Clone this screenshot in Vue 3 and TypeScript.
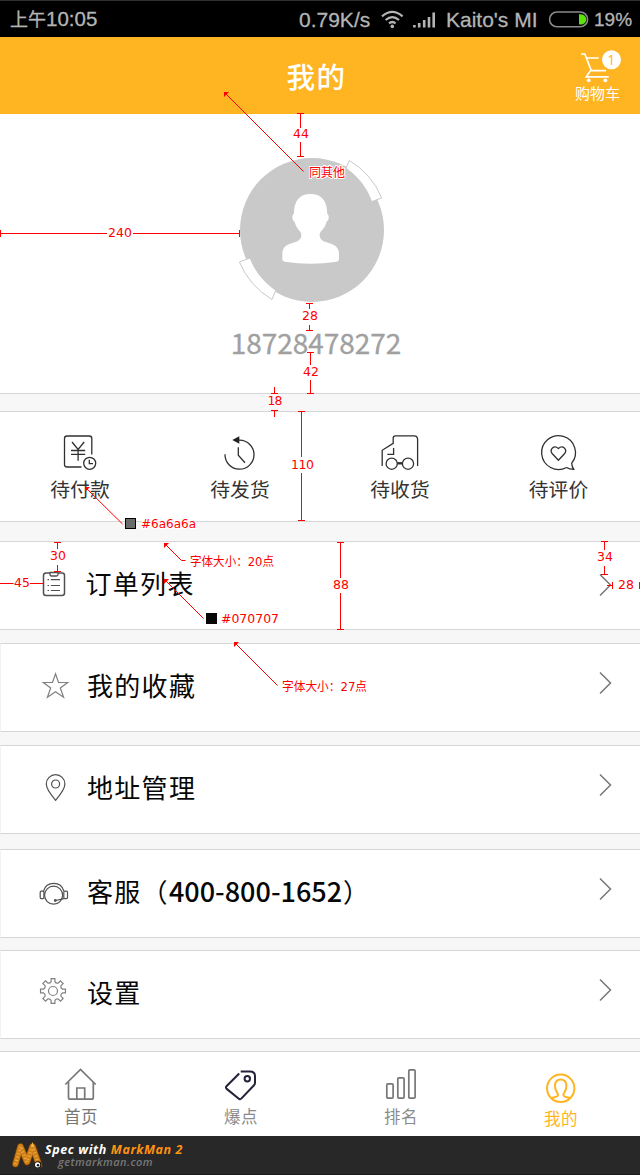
<script setup lang="ts">
interface Order { id: string; label: string }
interface Row { id: string; label: string; phone?: string }
interface Tab { id: string; label: string; active?: boolean }
interface Measure { x: number; y: number; text: string; path: string; width: number }
interface Pointer { tip: [number, number]; path: string }

const orders: Order[] = [
  { id: 'pay', label: '待付款' },
  { id: 'ship', label: '待发货' },
  { id: 'receive', label: '待收货' },
  { id: 'review', label: '待评价' },
]

const rows: Row[] = [
  { id: 'list', label: '订单列表' },
  { id: 'star', label: '我的收藏' },
  { id: 'pin', label: '地址管理' },
  { id: 'service', label: '客服', phone: '400-800-1652' },
  { id: 'gear', label: '设置' },
]

const tabs: Tab[] = [
  { id: 'home', label: '首页' },
  { id: 'tag', label: '爆点' },
  { id: 'rank', label: '排名' },
  { id: 'me', label: '我的', active: true },
]

// Eight-tooth cog outline with rounded valleys
function cog(cx: number, cy: number): string {
  const pt = (r: number, a: number) =>
    `${(cx + r * Math.cos(a)).toFixed(2)} ${(cy + r * Math.sin(a)).toFixed(2)}`
  let d = ''
  for (let i = 0; i < 8; i++) {
    const a = (i * Math.PI) / 4
    d += `${i ? 'L' : 'M'}${pt(9.6, a - 0.2)}L${pt(12.6, a - 0.15)}L${pt(12.6, a + 0.15)}L${pt(9.6, a + 0.2)}`
    d += `Q${pt(8, a + Math.PI / 8)} ${pt(9.6, a + Math.PI / 4 - 0.2)}`
  }
  return d + 'Z'
}
const cogPath = cog(15, 13)

const vertical = (x: number, a: number, b: number, c: number, d: number) =>
  `M${x - 3.5} ${a}h7M${x} ${a}V${b}M${x} ${c}V${d}M${x - 3.5} ${d}h7`

const measures: Measure[] = [
  { x: 301, y: 133.5, text: '44', width: 16, path: vertical(300.5, 113.5, 128, 142, 156.5) },
  { x: 120, y: 233, text: '240', width: 24, path: 'M0.5 230v7M0 233.5H107M133 233.5H239.5M239.5 230v7' },
  { x: 310, y: 315.5, text: '28', width: 16, path: vertical(309.5, 303.5, 309, 325, 330.5) },
  { x: 311, y: 371.5, text: '42', width: 16, path: vertical(310.5, 352.5, 365, 380, 393.5) },
  { x: 275, y: 401, text: '18', width: 15, path: 'M271 393.5h7M274.5 387v6M271 410.5h7M274.5 411v6' },
  { x: 302.5, y: 464.5, text: '110', width: 23, path: vertical(301.5, 411.5, 457, 473, 520.5) },
  { x: 58, y: 555.5, text: '30', width: 16, path: vertical(57.5, 542.5, 549, 565, 571.5) },
  { x: 22, y: 583, text: '45', width: 16, path: 'M0 583.5H14M30 583.5H43M43.5 580v7' },
  { x: 341, y: 585, text: '88', width: 16, path: vertical(340.5, 542.5, 578, 593, 629.5) },
  { x: 605, y: 557, text: '34', width: 16, path: vertical(604.5, 541.5, 550, 566, 574.5) },
  { x: 626, y: 585, text: '28', width: 16, path: 'M607 585.5H612M612.5 582v7M639.5 582v7' },
]

const pointers: Pointer[] = [
  { tip: [224, 92], path: 'M225 93L303.5 171.5' },
  { tip: [85, 487], path: 'M86 488L122.5 524' },
  { tip: [164, 543], path: 'M165 544L181.5 560.5H185.5' },
  { tip: [164, 579], path: 'M165 580L203.5 618.5' },
  { tip: [234, 642], path: 'M235 643L277.5 685.5' },
]

const notes = [
  { x: 309, y: 176.5, text: '同其他', width: 36 },
  { x: 190, y: 565.5, text: '字体大小：20点', width: 84 },
  { x: 282, y: 690.5, text: '字体大小：27点', width: 85 },
  { x: 141, y: 528, text: '#6a6a6a', width: 55 },
  { x: 221, y: 623, text: '#070707', width: 58 },
]
</script>

<template>
  <div class="page">
    <div class="status">
      <span class="clock"><span class="cjk">上午</span>10:05</span>
      <span class="speed">0.79K/s</span>
      <svg width="24" height="20" viewBox="0 0 24 20" class="line status-line">
        <path d="M1 6.3Q11.3 -2.6 21.6 6.3M4.6 10Q11.3 4.2 18 10M8 13.4Q11.3 10.6 14.6 13.4" stroke-width="2.2" />
        <circle cx="11.3" cy="16.4" r="1.8" class="dot" />
      </svg>
      <svg width="24" height="20" viewBox="0 0 24 20" class="line status-line">
        <path d="M1.400 17.500v-2.500M6.200 17.500v-4.500M11.200 17.500v-7.500M16 17.500v-10.500M20.700 17.500v-15" stroke-width="2.6" />
      </svg>
      <span class="carrier">Kaito's MI</span>
      <svg width="42" height="20" viewBox="0 0 42 20">
        <rect x="1.6" y="2" width="38" height="14.8" rx="7.4" class="battery" />
        <path d="M31 4.200h2a5.2 5.2 0 0 1 0 10.4h-2z" class="charge" />
      </svg>
      <span class="percent">19%</span>
    </div>

    <header class="header">
      <h1>我的</h1>
      <div class="cart">
        <svg width="44" height="34" viewBox="577 49 44 34">
          <path d="M581 54h3.8L591 70l-4.8 6.8h22.6M586.7 58h12M590.5 70.6h15.5" class="cart-line" />
          <circle cx="588.7" cy="80.3" r="1.9" fill="#fff" />
          <circle cx="605.3" cy="80.3" r="1.9" fill="#fff" />
          <circle cx="611.5" cy="59.7" r="9.5" fill="#fff" />
          <text x="611.3" y="64.8" class="badge">1</text>
        </svg>
        <span>购物车</span>
      </div>
    </header>

    <section class="profile">
      <svg width="156" height="152" viewBox="234 154 156 152">
        <circle cx="312" cy="230" r="72" fill="#c9c9c9" />
        <g fill="#fff" stroke="#c9c9c9">
          <path d="M346 168.2L349.3 160.5A79 79 0 0 1 381.7 197.8L371.7 201.7A70 70 0 0 0 346 168.2Z" />
          <path d="M250 258L239.4 262A79 79 0 0 0 272 299.5L275.7 290.3A70 70 0 0 1 250 258Z" />
        </g>
        <path fill="#fff" d="M310.5 194C299 194 294 201.500 294 213.500C291.500 215.500 291.800 220 294.700 222C296 227 298 229 300.500 232C302.500 235.500 301 239.500 297 241.500C290 244 282.300 244.500 282.300 254V258.500C282.300 260.500 283 261.300 285 261.700Q310.500 266 336.500 261.700C338.300 261.300 339 260.500 339 258.500V254C339 244.500 331 244 324 241.500C320 239.500 318.500 235.500 320.500 232C323 229 325.500 227 326.300 222C329.300 220 329.500 215.500 327.200 213.500C327.200 201.500 322 194 310.500 194Z" />
      </svg>
      <p class="account">18728478272</p>
    </section>

    <section class="orders">
      <div v-for="o in orders" :key="o.id" class="order">
        <svg width="44" height="44" viewBox="0 0 44 44" class="line order-line">
          <template v-if="o.id === 'pay'">
            <path d="M34.300 23.500V7.500Q34.300 5 31.800 5H9.500Q7 5 7 7.500V33.500Q7 36 9.500 36H24" transform="translate(-.5 0)" />
            <path d="M14 11L20.100 18.500L26.200 11M20.100 18.500V29.700M13 19.500H27.200M13 23.300H27.200" />
            <circle cx="31.700" cy="32.300" r="6" />
            <path d="M31.300 28.700V32.700H35" />
          </template>
          <template v-else-if="o.id === 'ship'">
            <path d="M7 23.300A14.500 14.500 0 1 0 21.500 9.200H20" />
            <path d="M20.300 16.300V24.300L27 31.700" />
            <path d="M14.300 9L21.300 5.200V12.700Z" fill="#222" stroke="none" />
          </template>
          <template v-else-if="o.id === 'receive'">
            <path d="M4.200 35V19.300L15.200 12.300V7Q15.200 4.800 17.400 4.800H36Q39.600 4.800 39.600 8.400V35" />
            <path d="M15.600 17V23.400H9.300" />
            <circle cx="13.700" cy="32.700" r="5.600" />
            <circle cx="30" cy="32.700" r="5.600" />
            <path d="M19.300 32.300H24.500" stroke-width="2.400" />
          </template>
          <template v-else>
            <path d="M29.500 36.400A16.900 16.900 0 1 1 34.500 31.800L36.500 38Z" transform="translate(-1 0)" stroke="none" />
            <path d="M28.500 36.500A16.900 16.900 0 1 1 33.700 32.200Q33.800 35.300 35.700 38.400Q31.500 38.300 28.500 36.500" />
            <path d="M20.400 29.200L14.100 22.500C11.200 18.500 15.900 13.500 20.400 17.500C24.900 13.500 29.600 18.500 26.700 22.500Z" />
          </template>
        </svg>
        <span>{{ o.label }}</span>
      </div>
    </section>

    <section v-for="r in rows" :key="r.id" class="row" :class="'row-' + r.id">
      <svg width="32" height="33" viewBox="0 0 32 33" class="line row-line">
        <template v-if="r.id === 'list'">
          <rect x="5.500" y="3.900" width="21" height="22.600" rx="2.500" stroke-width="1.500" />
          <path d="M12 3.500V5.500Q12 7 13.500 7H18.500Q20 7 20 5.500V3.500Z" fill="#fff" stroke-width="1.300" />
          <path d="M9.500 10.700h1.500M12.800 10.700H22M9.500 16.500h1.500M12.800 16.500H22M9.500 21.500h1.500M12.800 21.500H22" />
        </template>
        <path v-else-if="r.id === 'star'" class="light" d="M17.500 2.800L20.500 11.500H29.700L22.300 16.900L25.600 26.300L17.500 20.700L9.400 26.300L12.700 16.900L5.300 11.500H14.500Z" />
        <template v-else-if="r.id === 'pin'">
          <path d="M17.600 27.300C14 23 8.300 16.500 8.300 11A9.300 9.300 0 0 1 26.900 11C26.900 16.500 21.200 23 17.600 27.300Z" />
          <circle cx="17.600" cy="11" r="4" />
        </template>
        <template v-else-if="r.id === 'service'">
          <circle cx="15.600" cy="18.200" r="9" />
          <path d="M5.600 14C7 9 11 6.400 15.700 6.400S24.400 9 25.800 14" />
          <rect x="2.200" y="14.200" width="3.700" height="7.400" rx="1" />
          <rect x="25.800" y="14.200" width="3.700" height="7.400" rx="1" />
          <path d="M26 21.700L17.500 23.500" /><circle cx="17.300" cy="23.500" r="0.800" />
        </template>
        <template v-else>
          <path :d="cogPath" class="light" /><circle cx="15" cy="13" r="4.500" class="light" />
        </template>
      </svg>
      <span class="row-label">{{ r.label }}<template v-if="r.phone">（<b>{{ r.phone }}</b>）</template></span>
      <svg width="14" height="24" viewBox="0 0 14 24" class="line chevron"><path d="M1 1.500L11.500 12L1 22.500" /></svg>
    </section>

    <nav class="tabs">
      <div v-for="t in tabs" :key="t.id" class="tab" :class="[{ active: t.active }, 'tab-' + t.id]">
        <svg width="40" height="40" viewBox="0 0 40 40" class="line tab-line">
          <template v-if="t.id === 'home'">
            <path d="M4.300 20.500L19.500 5.500L34.700 20.500" />
            <path d="M7.500 18V33.500Q7.500 35.200 9.200 35.200H30.600Q32.300 35.200 32.300 33.500V18M15.800 35V24H23.700V35" />
          </template>
          <template v-else-if="t.id === 'tag'">
            <path d="M19.700 7.500H29Q34 7.500 34 12V18.800Q34 20.300 33 21.300L20.500 34.400Q19 36 17.500 34.500L5.700 24.900Q4.200 23.500 5.700 22L18.200 9.500" />
            <circle cx="26.300" cy="14.700" r="2.700" />
          </template>
          <template v-else-if="t.id === 'rank'">
            <rect x="5.800" y="19.900" width="6.300" height="14.200" rx="1" />
            <rect x="16.800" y="13.800" width="6.300" height="20.300" rx="1" />
            <rect x="27.800" y="5.900" width="6.300" height="28.200" rx="1" />
          </template>
          <template v-else>
            <circle cx="19.700" cy="24.300" r="13.700" />
            <path d="M10.500 34.200C13 32.800 17.400 33.500 17 30.500C16.800 29 14 27 14 22C14 17.500 16 15.500 19.700 15.500S25.400 17.500 25.400 22C25.400 27 22.600 29 22.400 30.500C22 33.500 26.400 32.800 28.900 34.200" />
          </template>
        </svg>
        <span>{{ t.label }}</span>
      </div>
    </nav>

    <footer class="credit">
      <svg width="34" height="30" viewBox="0 0 34 30">
        <g fill="none" stroke-linecap="round">
          <path d="M4.500 23L9.500 5.500L16 21L21.500 5.500L28 24" stroke="#6d3b06" stroke-width="7" stroke-linejoin="round" />
          <path d="M4.500 23L9.500 5.500L16 21L21.500 5.500L28 24" stroke="#d08019" stroke-width="5.500" stroke-linejoin="round" />
          <path d="M4.500 23L9.500 5.500L16 21L21.500 5.500L28 24" stroke="#f3b54c" stroke-width="3" stroke-dasharray="0.800 2.600" stroke-linecap="butt" />
        </g>
        <circle cx="27" cy="23.800" r="3.500" fill="#111" />
        <circle cx="26.600" cy="23.800" r="2.600" fill="#fff" />
        <circle cx="27" cy="24.200" r="1.200" fill="#111" />
      </svg>
      <div class="credit-text">
        <p>Spec with <em>MarkMan 2</em></p>
        <small>getmarkman.com</small>
      </div>
    </footer>

    <svg class="spec" width="640" height="1175" viewBox="0 0 640 1175">
      <path v-for="m in measures" :key="m.path" :d="m.path" class="rule" />
      <g v-for="p in pointers" :key="p.path">
        <path :d="p.path" class="leader" />
        <path :d="`M${p.tip[0]} ${p.tip[1]}h5l-5 5z`" fill="#f00" />
      </g>
      <rect x="125.500" y="518.500" width="10" height="10" fill="#6a6a6a" stroke="#000" />
      <rect x="206" y="613" width="11" height="11" fill="#070707" />
      <text v-for="m in measures" :key="'t' + m.path" :x="m.x" :y="m.y + 4.2" :textLength="m.width" text-anchor="middle">{{ m.text }}</text>
      <text v-for="n in notes" :key="n.text" :x="n.x" :y="n.y" :textLength="n.width" lengthAdjust="spacingAndGlyphs">{{ n.text }}</text>
    </svg>
  </div>
</template>

<style>
body { margin: 0; }
</style>

<style scoped>
.page {
  position: relative;
  width: 640px;
  height: 1175px;
  overflow: hidden;
  background: #f7f7f7;
  font-family: "Noto Sans CJK SC", sans-serif;
  box-sizing: border-box;
}
p, h1 { margin: 0; font-weight: 400; }
.line { fill: none; stroke: #333; stroke-width: 1.3; }

.status {
  display: grid;
  grid-template-columns: 289px 82px 32px 33px 102px 46px 46px;
  align-items: center;
  height: 37px;
  padding-left: 10px;
  box-sizing: border-box;
  border-top: 1px solid #303030;
  background: #000;
  color: #b4b4b4;
  font: 21px/36px "Liberation Sans", "Noto Sans CJK SC", sans-serif;
  -webkit-text-stroke: .3px #b4b4b4;
  white-space: nowrap;
}
.clock { font-size: 20.5px; }
.cjk { font-size: 18px; }
.percent { font-size: 19px; }
.status-line { stroke: #b4b4b4; }
.dot { fill: #b4b4b4; stroke: none; }
.battery { fill: none; stroke: #8a8a8a; stroke-width: 1.6; }
.charge { fill: #5be40c; }

.header {
  display: grid;
  grid-template-columns: 100px 1fr 100px;
  height: 77px;
  background: #ffb422;
  color: #fff;
}
.header h1 {
  grid-column: 2;
  padding-right: 7px;
  text-align: center;
  font-size: 28.5px;
  line-height: 78px;
  font-weight: 500;
  letter-spacing: 1.5px;
}
.cart { display: flex; flex-direction: column; align-items: flex-start; padding: 12px 0 0 35px; font-size: 15px; line-height: 19px; }
.cart svg { display: block; margin-left: 2px; }
.cart-line { fill: none; stroke: #fff; stroke-width: 1.7; }
.badge { fill: #ffb422; font: 500 14px "Open Sans", sans-serif; text-anchor: middle; }

.profile {
  display: flex;
  flex-direction: column;
  align-items: center;
  height: 280px;
  padding: 40px 16px 0 0;
  box-sizing: border-box;
  border-bottom: 1px solid #d6d6d6;
  background: #fff;
}
.profile svg { flex: none; }
.account { margin: 16px 0 0 8px; color: #a0a0a0; font-size: 28px; line-height: 40px; letter-spacing: -.05px; -webkit-text-stroke: .3px #a0a0a0; }

.orders, .row, .tabs { border-top: 1px solid #d6d6d6; background: #fff; box-sizing: border-box; }
.orders {
  display: grid;
  grid-template-columns: repeat(4, 160px);
  height: 111px;
  margin-top: 17px;
  border-bottom: 1px solid #d6d6d6;
}
.order { display: flex; flex-direction: column; align-items: center; padding-top: 19px; color: #333; font-size: 19.8px; line-height: 28px; }
.order:last-child span { margin-right: 3px; }
.order-line { stroke: #303030; }

.row {
  display: flex;
  align-items: center;
  height: 89px;
  padding: 0 27px 0 38px;
  border-bottom: 1px solid #d6d6d6;
  color: #070707;
  font-size: 26px;
  line-height: 40px;
  letter-spacing: 1.3px;
  white-space: nowrap;
}
.row-line { stroke: #505050; stroke-width: 1.2; }
.light { stroke: #808080; }
.row-list { margin-top: 19px; }
.row-star, .row-pin { margin-top: 13px; }
.row-service { margin-top: 15px; }
.row-gear { margin-top: 12px; }
.row:not(.row-list) { padding-left: 37px; border-left: 1px solid #f2f2f2; }
.row-label { margin: -5px 0 0 17px; }
.row-list .row-label { margin-left: 15.5px; }
.row-label b { margin-right: 1px; font-size: 27px; font-weight: 500; letter-spacing: 0; }
.chevron { margin: -10px 0 0 auto; stroke: #777; stroke-width: 1.5; }
.row-list .chevron { margin-top: -1px; }

.tabs { display: grid; grid-template-columns: repeat(4, 160px); height: 85px; margin-top: 12px; padding-left: 1px; overflow: hidden; }
.tab { display: flex; flex-direction: column; align-items: center; padding-top: 12px; color: #777; font-size: 16.5px; line-height: 24px; letter-spacing: .6px; }
.tab-line { stroke: #777; stroke-width: 1.7; }
.tab-tag .tab-line { stroke: #22223a; stroke-width: 2; }
.active { color: #ffb422; }
.active span { margin-top: 2px; }
.active .tab-line { stroke: #ffb422; stroke-width: 2; }
.tab-rank, .tab-tag { color: #8c8c8c; }

.credit { display: flex; height: 39px; padding-left: 11px; box-sizing: border-box; background: #282828; border-bottom: 1px solid #1b1b1b; }
.credit svg { flex: none; margin-top: 5px; }
.credit-text { font-family: "Open Sans", sans-serif; font-style: italic; color: #fff; white-space: nowrap; }
.credit p { margin-top: 6px; font-size: 12.5px; line-height: 16px; font-weight: 700; letter-spacing: .6px; }
.credit em { color: #ff9211; }
.credit small { display: block; margin: -3px 0 0 13px; color: #777; font-size: 11px; line-height: 14px; font-weight: 600; letter-spacing: .42px; }

.spec { position: absolute; left: 0; top: 0; }
.spec text { fill: #f00; stroke: #fff; stroke-width: 2px; paint-order: stroke; font: 12.5px "DejaVu Sans", "Noto Sans CJK SC", sans-serif; }
.rule, .leader { fill: none; stroke: #f00; stroke-width: 1; }
.rule { shape-rendering: crispEdges; }
</style>
